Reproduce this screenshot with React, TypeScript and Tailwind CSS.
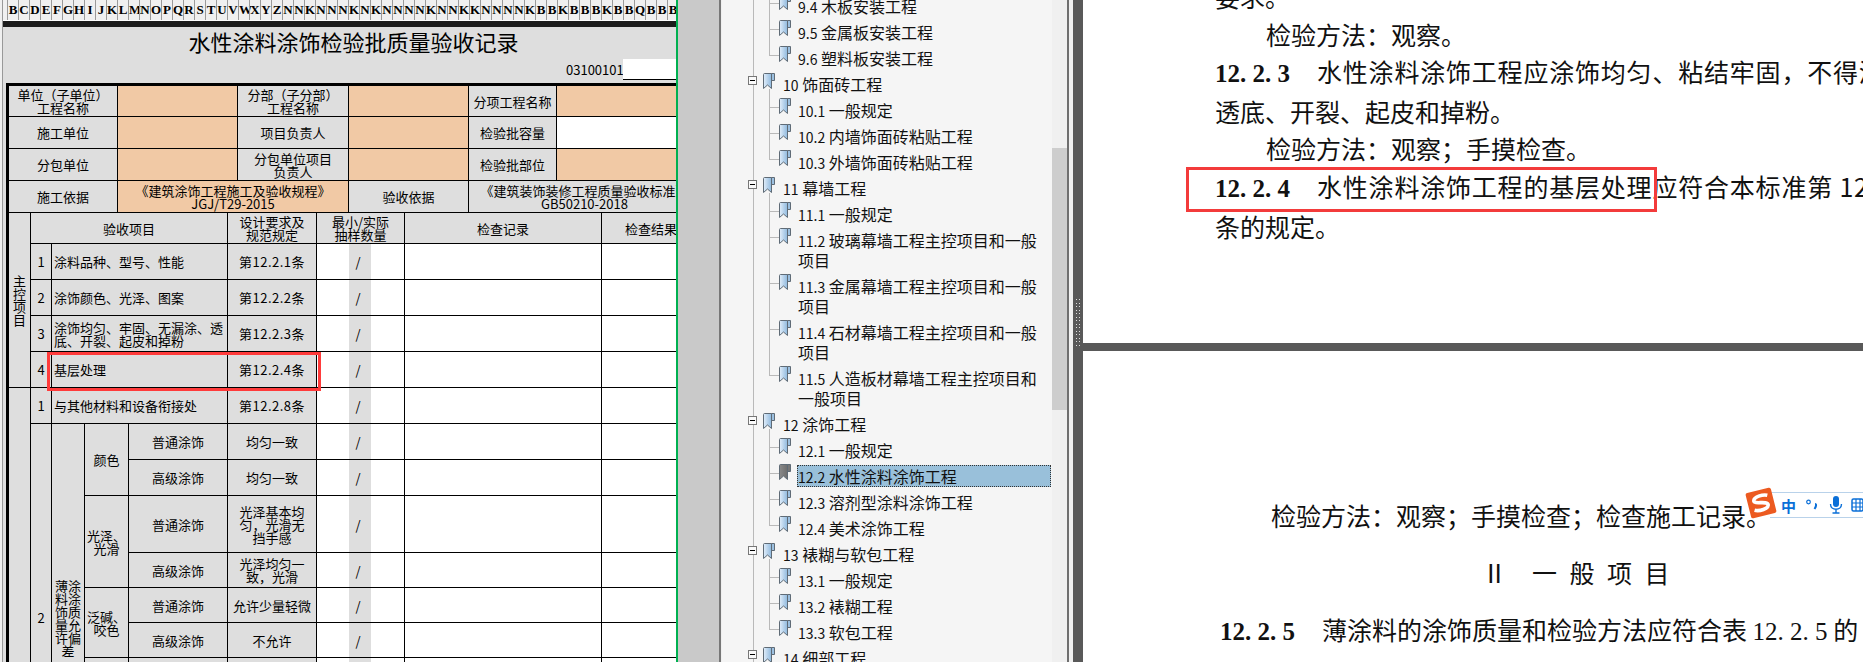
import React from "react";

const CJK = { fontFamily: '"Noto Sans CJK SC", "Noto Sans", sans-serif' };
const letters = "BCDEFGHIJKLMNOPQRSTUVWXYZNNKNNNKNKNNNNKNNKKNNNNKBBKBBBKBBQBBB".split("");

const g = "border border-black p-0 text-center align-middle bg-[#dedede] overflow-hidden";
const o = "border border-black p-0 text-center align-middle bg-[#f1c9a5]";
const w = "border border-black p-0 bg-white";
const gl = "border border-black p-0 pl-[2px] text-left align-middle bg-[#dedede] overflow-hidden";
const clause = "border border-black p-0 text-center align-middle bg-[#dedede] overflow-hidden tracking-[0.5px]";

function Slash() {
  return (
    <>
      <td className="border-y border-l border-black p-0 bg-white" />
      <td className="border-y border-black p-0 bg-[#dedede] text-left pl-[7px] align-middle">/</td>
      <td className="border-y border-r border-black p-0 bg-white" />
    </>
  );
}

function Rest() {
  return (
    <>
      <Slash />
      <td className={w} />
      <td className={w} />
    </>
  );
}

function Sheet() {
  return (
    <div className="relative w-[676px] shrink-0 overflow-hidden bg-[#dedede] text-black text-[13px] leading-[13px] flex" style={CJK}>
      <div className="w-[3px] shrink-0 bg-[#f0f0f0] border-r border-[#999]" />
      <div className="flex-1 min-w-0">
        <div className="flex h-[20px] bg-[#f0f0f0] pl-[4px] overflow-hidden" style={{ fontFamily: '"Liberation Serif", serif' }}>
          {letters.map((l, i) => (
            <div key={i} className="w-[11px] shrink-0 border-l border-[#9a9a9a] text-center text-[13px] font-bold leading-[20px]">{l}</div>
          ))}
        </div>
        <div className="h-[7px] bg-[#1c1c1c] border-t border-white" />
        <div className="h-[32px] w-[701px] text-center text-[22px] leading-[28px]">水性涂料涂饰检验批质量验收记录</div>
        <div className="flex h-[21px] pl-[563px] items-center">
          <span className="w-[57px] whitespace-nowrap">03100101</span>
          <div className="h-[21px] w-[120px] bg-white border-b border-black" />
        </div>
        <div className="h-[3px]" />
        <div className="ml-[3px] w-[694px] border-l-2 border-t-2 border-black">
          <table className="table-fixed border-collapse w-[692px] text-[13px] leading-[13px]">
            <colgroup>
              <col className="w-[109px]" /><col className="w-[120px]" /><col className="w-[111px]" />
              <col className="w-[120px]" /><col className="w-[88px]" /><col className="w-[144px]" />
            </colgroup>
            <tbody>
              <tr className="h-[31px]">
                <td className={g}>单位（子单位）<br />工程名称</td><td className={o} />
                <td className={g}>分部（子分部）<br />工程名称</td><td className={o} />
                <td className={g}>分项工程名称</td><td className={o} />
              </tr>
              <tr className="h-[32px]">
                <td className={g}>施工单位</td><td className={o} />
                <td className={g}>项目负责人</td><td className={o} />
                <td className={g}>检验批容量</td><td className={w} />
              </tr>
              <tr className="h-[32px]">
                <td className={g}>分包单位</td><td className={o} />
                <td className={g}>分包单位项目<br />负责人</td><td className={o} />
                <td className={g}>检验批部位</td><td className={o} />
              </tr>
              <tr className="h-[32px]">
                <td className={g}>施工依据</td>
                <td className={o} colSpan={2}>《建筑涂饰工程施工及验收规程》<br />JGJ/T29-2015</td>
                <td className={g}>验收依据</td>
                <td className={g} colSpan={2}>《建筑装饰装修工程质量验收标准》<br />GB50210-2018</td>
              </tr>
            </tbody>
          </table>
          <table className="-mt-px table-fixed border-collapse w-[692px] text-[13px] leading-[13px]">
            <colgroup>
              <col className="w-[22px]" /><col className="w-[21px]" /><col className="w-[33px]" /><col className="w-[44px]" />
              <col className="w-[99px]" /><col className="w-[89px]" /><col className="w-[32px]" /><col className="w-[22px]" />
              <col className="w-[34px]" /><col className="w-[197px]" /><col className="w-[99px]" />
            </colgroup>
            <tbody>
              <tr className="h-[31px]">
                <td className={g} rowSpan={5}><div className="mx-auto w-[13px] leading-[13px]">主控项目</div></td>
                <td className={g} colSpan={4}>验收项目</td>
                <td className={g}>设计要求及<br />规范规定</td>
                <td className={g} colSpan={3}>最小/实际<br />抽样数量</td>
                <td className={g}>检查记录</td>
                <td className={g}>检查结果</td>
              </tr>
              <tr className="h-[36px]">
                <td className={g}>1</td><td className={gl} colSpan={3}>涂料品种、型号、性能</td>
                <td className={clause}>第12.2.1条</td><Rest />
              </tr>
              <tr className="h-[36px]">
                <td className={g}>2</td><td className={gl} colSpan={3}>涂饰颜色、光泽、图案</td>
                <td className={clause}>第12.2.2条</td><Rest />
              </tr>
              <tr className="h-[36px]">
                <td className={g}>3</td><td className={gl} colSpan={3}>涂饰均匀、牢固、无漏涂、透<br />底、开裂、起皮和掉粉</td>
                <td className={clause}>第12.2.3条</td><Rest />
              </tr>
              <tr className="h-[36px]">
                <td className={g}>4</td><td className={gl} colSpan={3}>基层处理</td>
                <td className={clause}>第12.2.4条</td><Rest />
              </tr>
              <tr className="h-[36px]">
                <td className={g} rowSpan={8} />
                <td className={g}>1</td><td className={gl} colSpan={3}>与其他材料和设备衔接处</td>
                <td className={clause}>第12.2.8条</td><Rest />
              </tr>
              <tr className="h-[36px]">
                <td className={g} rowSpan={7}>2</td>
                <td className={g} rowSpan={7}><div className="mx-auto w-[26px] leading-[13px] text-center">薄涂料涂饰质量允许偏差</div></td>
                <td className={g} rowSpan={2}>颜色</td>
                <td className={g}>普通涂饰</td><td className={g}>均匀一致</td><Rest />
              </tr>
              <tr className="h-[36px]">
                <td className={g}>高级涂饰</td><td className={g}>均匀一致</td><Rest />
              </tr>
              <tr className="h-[57px]">
                <td className={g} rowSpan={2}>光泽、<br />光滑</td>
                <td className={g}>普通涂饰</td><td className={g}>光泽基本均<br />匀，光滑无<br />挡手感</td><Rest />
              </tr>
              <tr className="h-[35px]">
                <td className={g}>高级涂饰</td><td className={g}>光泽均匀一<br />致，光滑</td><Rest />
              </tr>
              <tr className="h-[35px]">
                <td className={g} rowSpan={2}>泛碱、<br />咬色</td>
                <td className={g}>普通涂饰</td><td className={g}>允许少量轻微</td><Rest />
              </tr>
              <tr className="h-[35px]">
                <td className={g}>高级涂饰</td><td className={g}>不允许</td><Rest />
              </tr>
              <tr className="h-[154px]">
                <td className={g} /><td className={g} /><td className={g} /><Rest />
              </tr>
            </tbody>
          </table>
        </div>
      </div>
      <div className="absolute left-[47px] top-[352px] h-[39px] w-[274px] border-[3px] border-[#ff3b3b]" />
    </div>
  );
}

function Bookmark({ gray }: { gray?: boolean }) {
  const id = gray ? "bmg" : "bmb";
  return (
    <svg width="12" height="16" viewBox="0 0 12 16" className="shrink-0">
      <defs>
        <linearGradient id={id} x1="0" y1="0" x2="1" y2="0">
          <stop offset="0" stopColor={gray ? "#8a8a8a" : "#e2eefa"} />
          <stop offset="1" stopColor={gray ? "#6e6e6e" : "#8fb9de"} />
        </linearGradient>
      </defs>
      <path d="M8.5 .5H11.5V7.5H8.5Z" fill={gray ? "#777" : "#9cc0e0"} stroke="#5f6b76" />
      <path d="M.5 1.5C.5 .8 1 .5 1.5 .5H8.5V15.5L4.5 12L.5 15.5Z" fill={`url(#${id})`} stroke="#5f6b76" />
    </svg>
  );
}

type Item = { t: string; l: 1 | 2; last?: boolean; sel?: boolean };
const items: Item[] = [
  { t: "9.4 木板安装工程", l: 2 },
  { t: "9.5 金属板安装工程", l: 2 },
  { t: "9.6 塑料板安装工程", l: 2, last: true },
  { t: "10 饰面砖工程", l: 1 },
  { t: "10.1 一般规定", l: 2 },
  { t: "10.2 内墙饰面砖粘贴工程", l: 2 },
  { t: "10.3 外墙饰面砖粘贴工程", l: 2, last: true },
  { t: "11 幕墙工程", l: 1 },
  { t: "11.1 一般规定", l: 2 },
  { t: "11.2 玻璃幕墙工程主控项目和一般\n项目", l: 2 },
  { t: "11.3 金属幕墙工程主控项目和一般\n项目", l: 2 },
  { t: "11.4 石材幕墙工程主控项目和一般\n项目", l: 2 },
  { t: "11.5 人造板材幕墙工程主控项目和\n一般项目", l: 2, last: true },
  { t: "12 涂饰工程", l: 1 },
  { t: "12.1 一般规定", l: 2 },
  { t: "12.2 水性涂料涂饰工程", l: 2, sel: true },
  { t: "12.3 溶剂型涂料涂饰工程", l: 2 },
  { t: "12.4 美术涂饰工程", l: 2, last: true },
  { t: "13 裱糊与软包工程", l: 1 },
  { t: "13.1 一般规定", l: 2 },
  { t: "13.2 裱糊工程", l: 2 },
  { t: "13.3 软包工程", l: 2, last: true },
  { t: "14 细部工程", l: 1 },
];

function Row({ it }: { it: Item }) {
  const cut = it.t.indexOf(" ");
  return (
    <div className={it.l === 1 ? "relative flex pl-[41px] shrink-0" : "relative flex pl-[57px] shrink-0"}>
      <div className="absolute left-[31px] top-0 bottom-0 w-px bg-[#b9b9b9]" />
      {it.l === 1 ? (
        <>
          <div className="absolute left-[26px] top-[5px] flex h-[9px] w-[9px] items-center justify-center border border-[#777] bg-[#fafafa]">
            <div className="h-px w-[5px] bg-black" />
          </div>
          <div className="absolute left-[47px] top-[18px] bottom-0 w-px bg-[#b9b9b9]" />
        </>
      ) : (
        <>
          <div className={it.last ? "absolute left-[47px] top-0 h-[10px] w-px bg-[#b9b9b9]" : "absolute left-[47px] top-0 bottom-0 w-px bg-[#b9b9b9]"} />
          <div className="absolute left-[47px] top-[10px] h-px w-[10px] bg-[#b9b9b9]" />
        </>
      )}
      <div className={it.l === 1 ? "relative mt-[2px] mr-[7px] shrink-0" : "relative mt-[1px] mr-[6px] shrink-0"}>
        <Bookmark gray={it.sel} />
      </div>
      <div className="flex-1 min-w-0 py-[3px]">
        <div className={it.sel ? "-my-px border border-dotted border-[#333] bg-[#99c0da] leading-[20px] whitespace-pre" : "-my-px border border-transparent leading-[20px] whitespace-pre"}>
          <span className="text-[14px] leading-none">{it.t.slice(0, cut)}</span>
          {it.t.slice(cut)}
        </div>
      </div>
    </div>
  );
}

function Nav() {
  return (
    <div className="flex w-[395px] shrink-0">
      <div className="w-[41px] shrink-0 bg-[#c9c9c9]" />
      <div className="w-[2px] shrink-0 bg-[#777]" />
      <div className="w-[1px] shrink-0 bg-[#efefef]" />
      <div className="flex w-[330px] shrink-0 flex-col overflow-hidden bg-[#f5f5f5] text-[16px] text-[#111]" style={CJK}>
        <div className="-mt-[7px] flex flex-col pr-[1px]">
          {items.map((it) => <Row key={it.t} it={it} />)}
        </div>
      </div>
      <div className="w-[15px] shrink-0 bg-[#f0f0f0] flex flex-col">
        <div className="h-[148px] shrink-0" />
        <div className="h-[262px] shrink-0 bg-[#cdcdcd]" />
      </div>
      <div className="w-[2px] shrink-0 bg-[#6f6f6f]" />
      <div className="w-[4px] shrink-0 bg-[#f0f0f0]" />
    </div>
  );
}

function Num({ children }: { children: React.ReactNode }) {
  return <span className="font-bold mr-[27px]" style={{ fontFamily: '"Liberation Serif", serif' }}>{children}</span>;
}

function Sogou() {
  return (
    <div className="absolute left-[1745px] top-[487px] flex h-[32px] w-[118px] items-center">
      <div className="absolute left-[25px] right-0 top-[5px] bottom-[1px] flex items-center border-y border-[#b9d2ea] bg-white pl-[11px] text-[#0a6fd8]">
        <span className="w-[27px] text-[15px] font-bold leading-none" style={CJK}>中</span>
        <svg width="12" height="14" viewBox="0 0 12 14" className="shrink-0">
          <circle cx="2.5" cy="4" r="1.8" fill="none" stroke="#0a6fd8" strokeWidth="1.2" />
          <path d="M9 6C10.5 6 10.5 8 8.5 11" fill="none" stroke="#0a6fd8" strokeWidth="2" />
        </svg>
        <svg width="14" height="18" viewBox="0 0 14 18" className="ml-[11px] shrink-0">
          <rect x="4" y="0" width="6" height="11" rx="3" fill="#0a6fd8" />
          <path d="M1.5 8C1.5 15 12.5 15 12.5 8M7 13V17M3.5 17H10.5" fill="none" stroke="#0a6fd8" strokeWidth="1.4" />
        </svg>
        <svg width="12" height="14" viewBox="0 0 12 14" className="ml-[8px] shrink-0">
          <rect x="1" y="1" width="11" height="12" rx="1.5" fill="none" stroke="#0a6fd8" strokeWidth="1.5" />
          <path d="M1 5H12M1 9H12M5 1V13M9 1V13" stroke="#0a6fd8" strokeWidth="1.2" />
        </svg>
      </div>
      <svg width="32" height="32" viewBox="0 0 32 32" className="relative shrink-0">
        <g transform="rotate(-14 16 16)">
          <rect x="3" y="3" width="26" height="26" rx="2" fill="#ec5a20" />
          <path d="M24 10C20 8 10 8 9.5 12.5C9 16 23 15 22.5 19.5C22 23.5 12.5 24 8 21.5" fill="none" stroke="#fff" strokeWidth="3.6" />
        </g>
      </svg>
    </div>
  );
}

function Pages() {
  return (
    <div className="flex-1 min-w-0 flex flex-col bg-[#595959] border-l-[10px] border-[#595959] text-[25px] text-[#111] relative" style={CJK}>
      <div className="absolute -left-[10px] top-[299px] grid h-[47px] w-[10px] grid-cols-2 content-between justify-items-center px-[1.5px]">
        {Array.from({ length: 28 }).map((_, i) => <div key={i} className="h-px w-px bg-[#ddd]" />)}
      </div>
      <div className="relative h-[343px] shrink-0 overflow-hidden bg-white pl-[132px] leading-[37.6px] whitespace-nowrap">
        <div className="-mt-[22px]">
          <div>要求。</div>
          <div className="pl-[51px]">检验方法：观察。</div>
          <div><Num>12. 2. 3</Num><span className="tracking-[0.8px]">水性涂料涂饰工程应涂饰均匀、粘结牢固，不得漆</span></div>
          <div>透底、开裂、起皮和掉粉。</div>
          <div className="pl-[51px]">检验方法：观察；手摸检查。</div>
          <div><Num>12. 2. 4</Num><span className="tracking-[0.8px]">水性涂料涂饰工程的基层处理应符合本标准第 12</span></div>
          <div>条的规定。</div>
        </div>
        <div className="absolute left-[103px] top-[167px] h-[45px] w-[471px] border-[3px] border-[#f33b3b]" />
      </div>
      <div className="mt-[8px] flex-1 overflow-hidden bg-white pt-[136px] leading-[57px] whitespace-nowrap">
        <div className="pl-[188px]">检验方法：观察；手摸检查；检查施工记录。</div>
        <div className="flex pl-[399px]">
          <span className="w-[50px]">Ⅱ</span>
          <span className="tracking-[12.5px]">一般项目</span>
        </div>
        <div className="pl-[137px]">
          <Num>12. 2. 5</Num>薄涂料的涂饰质量和检验方法应符合表 <span style={{ fontFamily: '"Liberation Serif", serif' }}>12. 2. 5</span> 的
        </div>
      </div>
    </div>
  );
}

export default function App() {
  return (
    <div className="relative flex h-[662px] w-[1863px] overflow-hidden bg-white">
      <Sheet />
      <div className="w-[2px] shrink-0 bg-[#00b050]" />
      <Nav />
      <Pages />
      <Sogou />
    </div>
  );
}
